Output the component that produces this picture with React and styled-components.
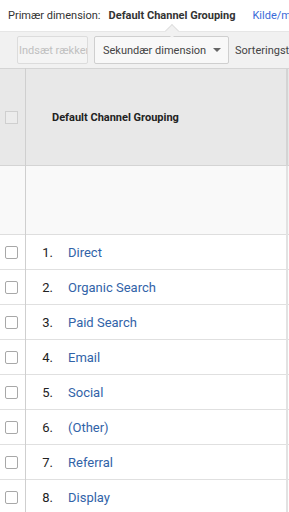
import React from 'react';
import styled, { createGlobalStyle } from 'styled-components';

const Global = createGlobalStyle`
  html, body { margin: 0; padding: 0; background: #fff; overflow: hidden; }
  body { font-family: Roboto, "Liberation Sans", Arial, sans-serif; }
`;

const rows = ['Direct', 'Organic Search', 'Paid Search', 'Email', 'Social', '(Other)', 'Referral', 'Display', 'Affiliates'];

function App() {
    return (
        <Page>
            <Global />
            <TopBar>
                <Label>Primær dimension:</Label>
                <Current>Default Channel Grouping</Current>
                <DimLink>Kilde/medie</DimLink>
            </TopBar>
            <Toolbar>
                <Notch />
                <Button disabled>Indsæt rækker</Button>
                <Select>
                    Sekundær dimension
                    <Caret />
                </Select>
                <SortLabel>Sorteringstype:</SortLabel>
            </Toolbar>
            <Table>
                <tbody>
                    <HeadRow>
                        <CheckCell><HeadBox /></CheckCell>
                        <HeadCell>Default Channel Grouping</HeadCell>
                        <NextHead><Split /></NextHead>
                    </HeadRow>
                    <TotalRow>
                        <CheckCell />
                        <DimCell />
                        <NextCell />
                    </TotalRow>
                    {rows.map((r, i) => (
                        <DataRow key={r}>
                            <CheckCell><RowBox /></CheckCell>
                            <DimCell>
                                <Num>{i + 1}.</Num>
                                <RowLink>{r}</RowLink>
                            </DimCell>
                            <NextCell />
                        </DataRow>
                    ))}
                </tbody>
            </Table>
        </Page>
    );
}

const Page = styled.div`
    width: 400px;
    color: #333;
`;
const TopBar = styled.div`
    height: 31px;
    display: flex;
    align-items: center;
    padding-left: 8px;
    white-space: nowrap;
    background: #fff;
`;
const Label = styled.span`
    font-size: 11px;
    color: #333;
    margin-right: 8px;
`;
const Current = styled.span`
    font-weight: bold;
    font-size: 11px;
    color: #333;
    margin-right: 17px;
`;
const DimLink = styled.span`
    font-size: 11px;
    color: #3a6ad8;
`;
const Toolbar = styled.div`
    position: relative;
    height: 37px;
    background: #f1f1f1;
    border-top: 1px solid #e6e6e6;
    display: flex;
    align-items: center;
    padding-left: 17px;
    gap: 6px;
    box-sizing: border-box;
    white-space: nowrap;
`;
const Notch = styled.div`
    position: absolute;
    left: 167px;
    top: -6px;
    width: 9px;
    height: 9px;
    background: #f1f1f1;
    border-left: 1px solid #e0e0e0;
    border-top: 1px solid #e0e0e0;
    transform: rotate(45deg);
`;
const Button = styled.button`
    height: 28px;
    width: 71px;
    padding: 0 0 0 1px;
    border: 1px solid #dcdcdc;
    border-radius: 2px;
    background: #f4f4f4;
    color: #c0c0c0;
    font-family: Roboto, "Liberation Sans", Arial, sans-serif;
    font-size: 11px;
    text-align: left;
    overflow: hidden;
    white-space: nowrap;
`;
const Select = styled.div`
    height: 28px;
    width: 135px;
    flex: none;
    box-sizing: border-box;
    border: 1px solid #cfcfcf;
    border-radius: 2px;
    background: #f8f8f8;
    color: #444;
    font-size: 11px;
    display: flex;
    align-items: center;
    padding-left: 8px;
    gap: 7px;
`;
const Caret = styled.span`
    width: 0;
    height: 0;
    border-left: 4px solid transparent;
    border-right: 4px solid transparent;
    border-top: 4px solid #666;
`;
const SortLabel = styled.span`
    font-size: 11px;
    color: #444;
`;
const Table = styled.table`
    border-collapse: collapse;
    width: 400px;
    table-layout: fixed;
    border-top: 1px solid #d4d4d4;
`;
const CheckCell = styled.td`
    width: 25px;
    padding: 0;
    border-right: 1px solid #cfcfcf;
    text-align: center;
    vertical-align: middle;
`;
const HeadRow = styled.tr`
    height: 97px;
    background: #e8e8e8;
    border-bottom: 1px solid #d4d4d4;
`;
const HeadBox = styled.div`
    width: 11px;
    height: 11px;
    margin-left: 5px;
    border: 1px solid #cfcfcf;
    background: #ececec;
`;
const HeadCell = styled.td`
    width: 234px;
    padding: 0 0 0 26px;
    font-size: 11px;
    font-weight: bold;
    color: #222;
    border-right: 2px solid #d4d4d4;
    vertical-align: middle;
`;
const NextHead = styled.td`
    padding: 0;
`;
const Split = styled.div`
    height: 48px;
`;
const TotalRow = styled.tr`
    height: 69px;
    background: #f9f9f9;
    border-bottom: 1px solid #dedede;
`;
const DataRow = styled.tr`
    height: 35px;
    background: #fff;
    border-bottom: 1px solid #e0e0e0;
`;
const DimCell = styled.td`
    padding: 0;
    font-size: 13px;
    border-right: 2px solid #e2e2e2;
    white-space: nowrap;
`;
const NextCell = styled.td`
    padding: 0;
`;
const RowBox = styled.div`
    width: 11px;
    height: 11px;
    margin-left: 5px;
    border: 1px solid #a8a8a8;
    border-radius: 2px;
    background: #fff;
`;
const Num = styled.span`
    display: inline-block;
    width: 27px;
    text-align: right;
    color: #222;
    margin-right: 15px;
`;
const RowLink = styled.span`
    color: #3163a8;
`;

export default App;
